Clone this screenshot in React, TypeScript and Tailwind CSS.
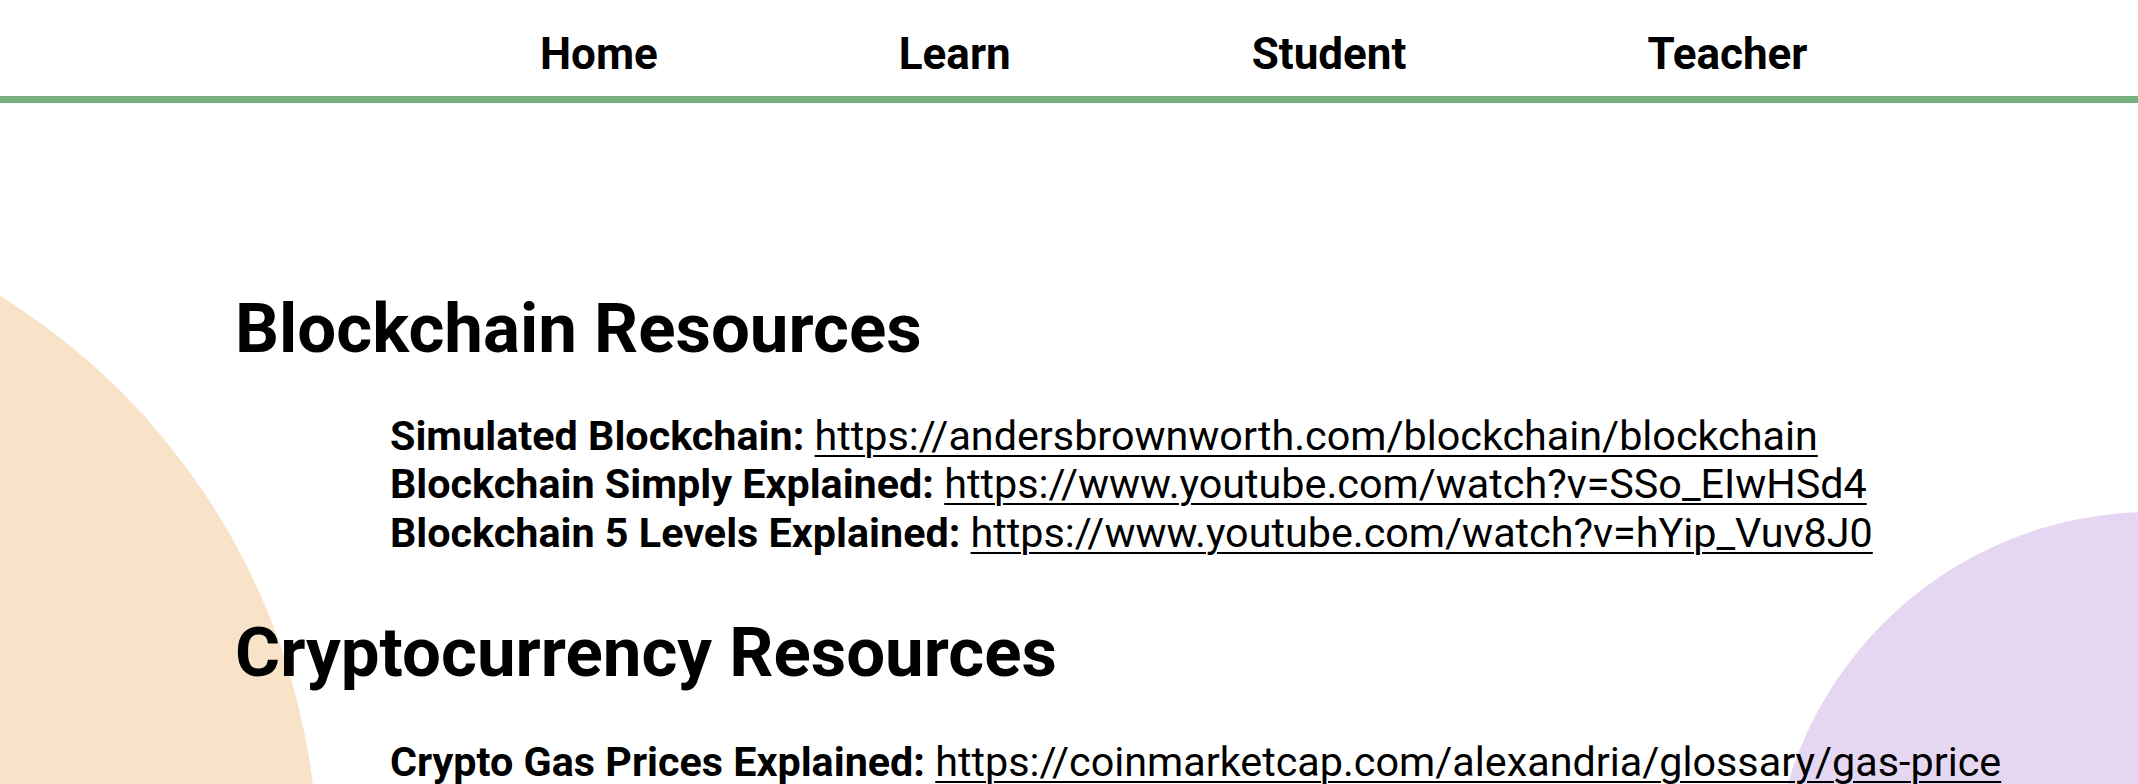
import React from "react";

function Item({ label, href }: { label: string; href: string }) {
  return (
    <div className="whitespace-nowrap">
      <span className="font-bold">{label}</span>{" "}
      <a href={href} className="underline underline-offset-[5px] decoration-[2px]">
        {href}
      </a>
    </div>
  );
}

export default function App() {
  return (
    <div className="relative w-full h-[784px] overflow-hidden bg-white text-black font-[Roboto,'Liberation_Sans',sans-serif]">
      {/* background blobs */}
      <div className="absolute left-[-1026px] top-[195px] w-[1344px] h-[1344px] rounded-full bg-[#f9e3c8]" />
      <div className="absolute left-[1772px] top-[512px] w-[760px] h-[760px] rounded-full bg-[#e5d7f2]" />

      <div className="relative">
        <header className="h-[103px] pt-[29px] border-b-[7px] border-[#78b07f]">
          <nav className="flex gap-[241px] pl-[540px] text-[44px] font-bold leading-[1.172]">
            <a href="#">Home</a>
            <a href="#">Learn</a>
            <a href="#">Student</a>
            <a href="#">Teacher</a>
          </nav>
        </header>

        <main className="pl-[235px] pt-[186px]">
          <h1 className="text-[69px] font-bold leading-[1.172]">Blockchain Resources</h1>
          <div className="pl-[155px] pt-[42px] text-[41.3px] leading-[1.172]">
            <Item label="Simulated Blockchain:" href="https://andersbrownworth.com/blockchain/blockchain" />
            <Item label="Blockchain Simply Explained:" href="https://www.youtube.com/watch?v=SSo_EIwHSd4" />
            <Item label="Blockchain 5 Levels Explained:" href="https://www.youtube.com/watch?v=hYip_Vuv8J0" />
          </div>
          <h1 className="pt-[56px] text-[69px] font-bold leading-[1.172]">Cryptocurrency Resources</h1>
          <div className="pl-[155px] pt-[44px] text-[41.3px] leading-[1.172]">
            <Item label="Crypto Gas Prices Explained:" href="https://coinmarketcap.com/alexandria/glossary/gas-price" />
          </div>
        </main>
      </div>
    </div>
  );
}
